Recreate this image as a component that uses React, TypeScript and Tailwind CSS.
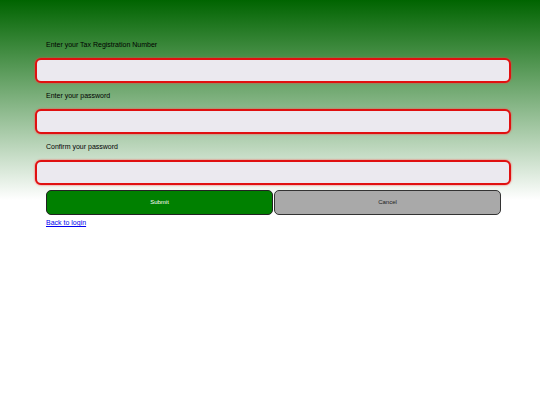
import { useState } from 'react';

const FIELDS = [
  { id: 'trn', label: 'Enter your Tax Registration Number', type: 'text' },
  { id: 'password', label: 'Enter your password', type: 'password' },
  { id: 'confirm', label: 'Confirm your password', type: 'password' },
];

export default function App() {
  const [values, setValues] = useState<Record<string, string>>({});

  return (
    <div
      className="min-h-[405px] w-full bg-[linear-gradient(to_bottom,#006400_0px,#ffffff_200px,#ffffff_100%)]"
      style={{ fontFamily: '"Liberation Sans", Arial, sans-serif' }}
    >
      <form className="ml-[46px] w-[455px] pt-[41px]" onSubmit={(e) => e.preventDefault()}>
        {FIELDS.map((f, i) => (
          <div key={f.id} className={i > 0 ? 'mt-[9px]' : ''}>
            <label htmlFor={f.id} className="block h-[8px] text-[7px] leading-[8px] text-black">
              {f.label}
            </label>
            <input
              id={f.id}
              type={f.type}
              value={values[f.id] ?? ''}
              onChange={(e) => setValues((v) => ({ ...v, [f.id]: e.target.value }))}
              className="mt-[9px] -ml-[11px] block h-[25px] w-[476px] rounded-[6px] border-2 border-[#e01010] bg-[#ebe9ef] outline-none shadow-[0_0_2px_#ff4040]"
            />
          </div>
        ))}
        <div className="mt-[5px] flex gap-[1px]">
          <button
            type="submit"
            className="h-[25px] flex-1 rounded-[5px] border-[1.5px] border-[#222] bg-[#008000] text-[6px] text-white"
          >
            Submit
          </button>
          <button
            type="button"
            className="h-[25px] flex-1 rounded-[5px] border-[1.5px] border-[#333] bg-[#a9a9a9] text-[6px] text-[#222]"
          >
            Cancel
          </button>
        </div>
        <a href="#" className="mt-[3px] block w-fit text-[7px] leading-[9px] text-[#0000ee] underline">
          Back to login
        </a>
      </form>
    </div>
  );
}
